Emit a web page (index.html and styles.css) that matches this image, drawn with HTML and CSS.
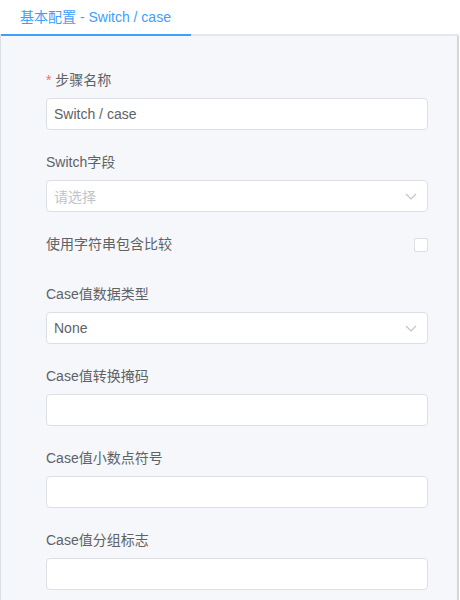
FILE: index.html
```html
<!DOCTYPE html>
<html lang="zh-CN">
<head>
  <meta charset="UTF-8" />
  <meta name="viewport" content="width=device-width, initial-scale=1.0"/>
  <title>Switch / case</title>
  <link rel="stylesheet" href="styles.css">
</head>
<body>

<div class="tabs">
  <div class="tab active">基本配置 - Switch / case</div>
</div>

<div class="panel">
  <div class="item">
    <label><span class="req">*</span> 步骤名称</label>
    <div class="input"><span class="value">Switch / case</span></div>
  </div>

  <div class="item">
    <label>Switch字段</label>
    <div class="input select">
      <span class="placeholder">请选择</span>
      <svg class="arrow" width="12" height="12" viewBox="0 0 12 12"><path d="M1 4l5 5 5-5" fill="none" stroke="#c0c4cc" stroke-width="1.2"/></svg>
    </div>
  </div>

  <div class="item check-row">
    <label>使用字符串包含比较</label>
    <span class="checkbox"></span>
  </div>

  <div class="item">
    <label>Case值数据类型</label>
    <div class="input select">
      <span class="value">None</span>
      <svg class="arrow" width="12" height="12" viewBox="0 0 12 12"><path d="M1 4l5 5 5-5" fill="none" stroke="#c0c4cc" stroke-width="1.2"/></svg>
    </div>
  </div>

  <div class="item">
    <label>Case值转换掩码</label>
    <div class="input"></div>
  </div>

  <div class="item">
    <label>Case值小数点符号</label>
    <div class="input"></div>
  </div>

  <div class="item">
    <label>Case值分组标志</label>
    <div class="input"></div>
  </div>
</div>

</body>
</html>
```

FILE: styles.css
```css
* {
  box-sizing: border-box;
}
body {
  margin: 0;
  font-family: "Liberation Sans", "Noto Sans CJK SC", sans-serif;
  font-size: 14px;
  color: #606266;
  background: #fff;
  height: 600px;
  overflow: hidden;
}
.tabs {
  display: flex;
  height: 36px;
  border-bottom: 2px solid #e4e7ed;
  width: 459px;
}
.tab {
  margin-left: 1px;
  padding: 0 19px;
  width: 190px;
  line-height: 34px;
  height: 36px;
  color: #409eff;
}
.tab.active {
  border-bottom: 2px solid #409eff;
}
.panel {
  width: 459px;
  height: 564px;
  background: #f5f7fa;
  border-left: 1px solid #dcdfe6;
  border-right: 2px solid #d4d6db;
  padding: 26px 29px 0 45px;
}
.item {
  margin-bottom: 14px;
}
.item label {
  display: block;
  line-height: 20px;
  padding: 8px 0;
}
.req {
  color: #f56c6c;
}
.input {
  height: 32px;
  background: #fff;
  border: 1px solid #dcdfe6;
  border-radius: 4px;
  padding: 0 7px;
  display: flex;
  align-items: center;
  justify-content: space-between;
}
.placeholder {
  color: #c0c4cc;
}
.arrow {
  margin-right: 3px;
}
.check-row {
  display: flex;
  align-items: center;
  justify-content: space-between;
  height: 36px;
}
.check-row label {
  padding: 0;
}
.checkbox {
  width: 14px;
  height: 14px;
  border: 1px solid #dcdfe6;
  border-radius: 2px;
  background: #fff;
  margin-top: 2px;
}
```
